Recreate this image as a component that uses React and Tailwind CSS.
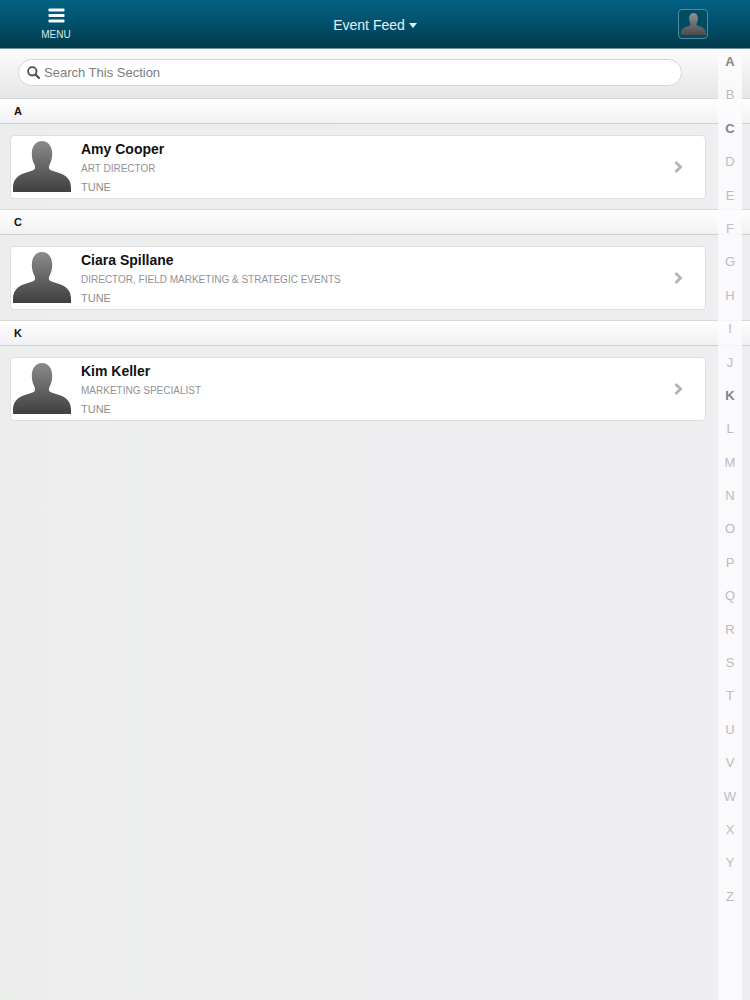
import React from 'react';

const people = [
  { letter: 'A', name: 'Amy Cooper', title: 'ART DIRECTOR', company: 'TUNE' },
  { letter: 'C', name: 'Ciara Spillane', title: 'DIRECTOR, FIELD MARKETING & STRATEGIC EVENTS', company: 'TUNE' },
  { letter: 'K', name: 'Kim Keller', title: 'MARKETING SPECIALIST', company: 'TUNE' },
];

const alphabet = 'ABCDEFGHIJKLMNOPQRSTUVWXYZ'.split('');

const Silhouette = ({ id, className, from, to }) => (
  <svg viewBox="0 0 58 51" className={className} aria-hidden="true">
    <defs>
      <linearGradient id={id} x1="0" y1="0" x2="0" y2="1">
        <stop offset="0" stopColor={from} />
        <stop offset="1" stopColor={to} />
      </linearGradient>
    </defs>
    <path
      fill={`url(#${id})`}
      d="M29 0C35.500 0 39.200 5.500 39.200 13C39.200 17.500 37.800 21.500 36 25C35.600 27.500 36.300 28.700 38.500 29.600L47 32.300C54 34.600 58 39.500 58 47V51H0V47C0 39.500 4 34.600 11 32.300L19.500 29.600C21.700 28.700 22.400 27.500 22 25C20.200 21.500 18.800 17.500 18.800 13C18.800 5.500 22.500 0 29 0Z"
    />
  </svg>
);

const Header = () => (
  <header className="grid h-[49px] shrink-0 grid-cols-3 items-center border-b border-[#6d909b] bg-linear-to-b from-[#036283] via-[#01506b] to-[#013a4a] text-white">
    <button type="button" className="ml-9 flex w-10 flex-col items-center gap-1 justify-self-start pt-[2px]">
      <svg viewBox="0 0 17 15" className="h-[15px] w-[17px]" fill="#f4fafc" aria-hidden="true">
        <rect x="0.500" y="0.500" width="16" height="3" rx="0.800" />
        <rect x="0.500" y="6" width="16" height="3" rx="0.800" />
        <rect x="0.500" y="11.500" width="16" height="3" rx="0.800" />
      </svg>
      <span className="text-[10px] leading-4 text-[#d8e8ee]">MENU</span>
    </button>
    <button type="button" className="flex items-center gap-1 justify-self-center pt-[2px] text-sm text-[#e4f0f4]">
      <span>Event Feed</span>
      <svg viewBox="0 0 8 5" className="h-[5px] w-2" fill="currentColor" aria-hidden="true">
        <path d="M0 0H8L4 5Z" />
      </svg>
    </button>
    <button
      type="button"
      aria-label="Profile"
      className="mr-[42px] flex h-[30px] w-[30px] items-end justify-center justify-self-end rounded-sm border border-[#4e8ca0] bg-[#024c62] pb-[3px]"
    >
      <Silhouette id="profile" className="h-[22px] w-[25px]" from="#8d9294" to="#4c4c4c" />
    </button>
  </header>
);

const SearchBar = () => (
  <div className="bg-linear-to-b from-[#fcfcfd] to-[#e6e6e7] pt-[10px] pr-[68px] pb-3 pl-[18px]">
    <label className="flex h-[27px] items-center gap-1 rounded-full border border-[#d6d6d8] bg-white pl-2">
      <svg viewBox="0 0 13 13" className="h-[13px] w-[13px] shrink-0" fill="none" stroke="#4d4d4d" aria-hidden="true">
        <circle cx="5.300" cy="5.300" r="4.200" strokeWidth="1.800" />
        <path d="M8.500 8.500L12 12" strokeWidth="2.200" strokeLinecap="round" />
      </svg>
      <input
        type="text"
        aria-label="Search This Section"
        placeholder="Search This Section"
        className="min-w-0 flex-1 bg-transparent text-[13px] text-[#333333] outline-none placeholder:text-[#7c7c7e]"
      />
    </label>
  </div>
);

const PersonSection = ({ person }) => (
  <section>
    <h2 className="h-[26px] border-y border-t-[#d8d8da] border-b-[#cecfd0] bg-linear-to-b from-white to-[#f1f1f3] pl-[14px] text-[11px] leading-6 font-bold text-[#111111]">
      {person.letter}
    </h2>
    <div className="pt-[11px] pr-11 pb-[10px] pl-[10px]">
      <a href="#" className="flex h-16 items-start rounded-sm border border-[#dfdfe1] bg-white pr-[22px] pl-[2px]">
        <Silhouette
          id={`person-${person.letter}`}
          className="mt-[5px] h-[51px] w-[58px] shrink-0"
          from="#8b8b8b"
          to="#3f3f3f"
        />
        <div className="ml-[10px] min-w-0 flex-1 pt-1">
          <p className="text-sm leading-[18px] font-bold text-[#111111]">{person.name}</p>
          <p className="pt-[2px] text-[10px] leading-[18px] text-[#929295]">{person.title}</p>
          <p className="text-[11px] leading-[18px] text-[#8d8d90]">{person.company}</p>
        </div>
        <svg viewBox="0 0 9 12" className="h-3 w-[9px] shrink-0 self-center" fill="none" stroke="#b4b4b4" strokeWidth="2.800" aria-hidden="true">
          <path d="M1.500 1L6.600 6L1.500 11" />
        </svg>
      </a>
    </div>
  </section>
);

const LetterIndex = () => (
  <nav aria-label="Alphabet" className="absolute inset-y-0 right-2 w-6 bg-[#fcfafd]/85 pt-[5px] pb-[95px]">
    <ul className="flex h-full flex-col items-center justify-between">
      {alphabet.map((letter) => {
        const active = people.some(p => p.letter === letter);
        return (
          <li key={letter} className="h-4 text-[13px] leading-4">
            <a href="#" className={active ? 'font-bold text-[#858587]' : 'text-[#bdbbbf]'}>
              {letter}
            </a>
          </li>
        );
      })}
    </ul>
  </nav>
);

const App = () => {
  return (
    <div className="flex min-h-screen flex-col bg-linear-to-r from-[#eceeec] via-[#eeedef] to-[#efedf0] font-['Liberation_Sans',Arial,sans-serif]">
      <Header />
      <main className="relative flex-1">
        <SearchBar />
        {people.map((person) => (
          <PersonSection key={person.letter} person={person} />
        ))}
        <LetterIndex />
      </main>
    </div>
  );
};

export default App;
